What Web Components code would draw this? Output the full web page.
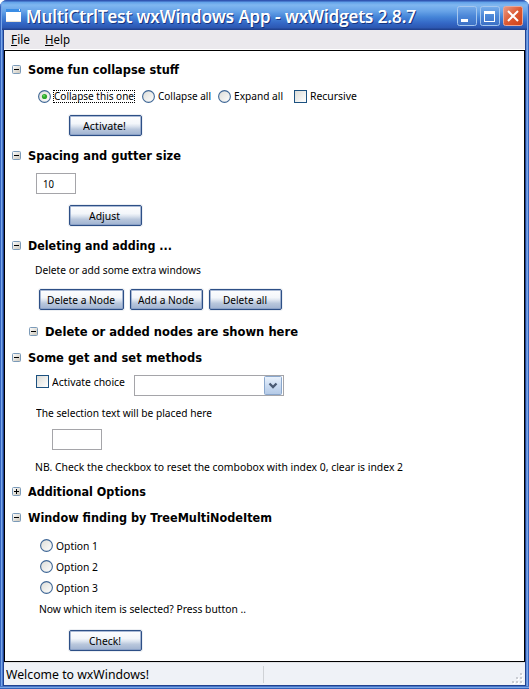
<!DOCTYPE html>
<html lang="en"><head><meta charset="utf-8"><title>MultiCtrlTest</title>
<style>
html,body{margin:0;width:529px;height:689px;overflow:hidden;background:#fff}
body{font:11px/16px "Noto Sans","Open Sans",sans-serif;color:#000}
</style></head><body>
<xp-window>
<xp-titlebar slot="title" w="390">MultiCtrlTest wxWindows App - wxWidgets 2.8.7</xp-titlebar>
<xp-menubar slot="menu"></xp-menubar>
<ui-row style="--gap:10px;--h:18px;--x:7px"><tree-node w="151">Some fun collapse stuff</tree-node></ui-row>
<ui-row style="--gap:8px;--h:18px;--x:33px"><xp-radio checked w="80" style="margin-right:8px">Collapse this one</xp-radio><xp-radio w="53" style="margin-right:7px">Collapse all</xp-radio><xp-radio w="49" style="margin-right:11px">Expand all</xp-radio><xp-check w="47">Recursive</xp-check></ui-row>
<ui-row style="--gap:10px;--h:21px;--x:64px"><xp-button style="width:73px" w="43">Activate!</xp-button></ui-row>
<ui-row style="--gap:11px;--h:18px;--x:7px"><tree-node w="153">Spacing and gutter size</tree-node></ui-row>
<ui-row style="--gap:8px;--h:21px;--x:31px"><xp-input style="width:40px"><fit-text w="11">10</fit-text></xp-input></ui-row>
<ui-row style="--gap:11px;--h:21px;--x:64px"><xp-button style="width:73px" w="31">Adjust</xp-button></ui-row>
<ui-row style="--gap:11px;--h:18px;--x:7px"><tree-node w="144">Deleting and adding ...</tree-node></ui-row>
<ui-row style="--gap:6px;--h:18px;--x:30px"><fit-text w="166">Delete or add some extra windows</fit-text></ui-row>
<ui-row style="--gap:10px;--h:21px;--x:34px"><xp-button style="width:85px;margin-right:6px" w="68">Delete a Node</xp-button><xp-button style="width:73px;margin-right:6px" w="56">Add a Node</xp-button><xp-button style="width:73px" w="44">Delete all</xp-button></ui-row>
<ui-row style="--gap:13px;--h:18px;--x:24px"><tree-node w="253">Delete or added nodes are shown here</tree-node></ui-row>
<ui-row style="--gap:8px;--h:18px;--x:7px"><tree-node w="174">Some get and set methods</tree-node></ui-row>
<ui-row style="--gap:8px;--h:21px;--x:31px"><xp-check style="align-self:flex-start;margin-right:9px" w="73">Activate choice</xp-check><xp-combo></xp-combo></ui-row>
<ui-row style="--gap:8px;--h:18px;--x:31px"><fit-text w="176">The selection text will be placed here</fit-text></ui-row>
<ui-row style="--gap:7px;--h:21px;--x:47px"><xp-input style="width:50px"></xp-input></ui-row>
<ui-row style="--gap:8px;--h:18px;--x:30px"><fit-text w="368">NB. Check the checkbox to reset the combobox with index 0, clear is index 2</fit-text></ui-row>
<ui-row style="--gap:7px;--h:18px;--x:7px"><tree-node collapsed w="118">Additional Options</tree-node></ui-row>
<ui-row style="--gap:8px;--h:18px;--x:7px"><tree-node w="244">Window finding by TreeMultiNodeItem</tree-node></ui-row>
<ui-row style="--gap:8px;--h:21px;--x:35px"><xp-radio w="42">Option 1</xp-radio></ui-row>
<ui-row style="--h:21px;--x:35px"><xp-radio w="42">Option 2</xp-radio></ui-row>
<ui-row style="--h:21px;--x:35px"><xp-radio w="42">Option 3</xp-radio></ui-row>
<ui-row style="--gap:1px;--h:20px;--x:34px"><fit-text w="207">Now which item is selected? Press button ..</fit-text></ui-row>
<ui-row style="--gap:11px;--h:21px;--x:64px"><xp-button style="width:73px" w="32">Check!</xp-button></ui-row>
<xp-statusbar slot="status">Welcome to wxWindows!</xp-statusbar>
</xp-window>
<script>
const define = (name, markup, setup) => customElements.define(name, class extends HTMLElement {
  connectedCallback() {
    if (this.shadowRoot) return;
    const root = this.attachShadow({mode: 'open'});
    const t = document.createElement('template');
    t.innerHTML = typeof markup === 'function' ? markup(this) : markup;
    root.append(t.content.cloneNode(true));
    if (setup) setup(this, root);
  }
});
const label = el => `<fit-text w="${el.getAttribute('w')}"><slot></slot></fit-text>`;

define('xp-window', `<style>
:host{display:flex;flex-direction:column;box-sizing:border-box;width:529px;height:689px;background:#2a52a8;border-radius:7px 7px 0 0;overflow:hidden}
.body{flex:1;min-height:0;display:flex;flex-direction:column;padding:0 4px 4px;background:linear-gradient(90deg,#3565bf 1px,#78a5e8 1px,#78a5e8 2px,#4979cd 2px,#4979cd 3px,#21428f 3px,#21428f 526px,#4979cd 526px,#78a5e8 527px,#78a5e8 528px,#3565bf 528px);box-shadow:inset 0 -1px #3262b9,inset 0 -2px #7aa5e5,inset 0 -3px #4776c9}
main{flex:1;min-height:0;background:#fff;border:1px solid #000}
</style><slot name="title"></slot><div class="body"><slot name="menu"></slot><main><slot></slot></main><slot name="status"></slot></div>`);

define('xp-titlebar', el => `<style>
:host{display:flex;align-items:center;height:30px;box-sizing:border-box;padding:2px 6px 0 6px;background:linear-gradient(#3156b2 0,#3156b2 1px,#5fa0e8 2px,#80b7f0 5px,#68a4e8 11px,#4585d8 17px,#3468c6 23px,#2c57b1 28px,#21428f 29px);box-shadow:inset 1px 0 #3565bf,inset 2px 0 #78a5e8,inset -1px 0 #3565bf,inset -2px 0 #78a5e8;font:600 17.5px/24px "Open Sans","Noto Sans",sans-serif;color:#fff;text-shadow:1px 1px #17347f,.3px 0 #fff}
.t{margin-left:5px;flex:1}.b{display:flex;gap:3px}svg{display:block}.i{margin-bottom:2px}
</style><svg class="i" width="15" height="13"><rect width="15" height="13" fill="#fff"/><rect width="15" height="3" fill="#3b8de5"/><rect x="13" width="1" height="2" fill="#d9ecff"/><rect y="12" width="15" height="1" fill="#e8e2d6"/></svg><div class="t">${label(el)}</div>
<div class="b">
<svg width="20" height="20"><defs><linearGradient id="g" x2="0" y2="1"><stop stop-color="#78aeeb"/><stop offset=".5" stop-color="#4c87d8"/><stop offset="1" stop-color="#3c70c5"/></linearGradient></defs><rect x=".5" y=".5" width="19" height="19" rx="2" fill="url(#g)" stroke="#a6c7ee"/><rect x="4" y="13" width="7" height="3" fill="#fff"/></svg>
<svg width="20" height="20"><rect x=".5" y=".5" width="19" height="19" rx="2" fill="url(#g)" stroke="#a6c7ee"/><path d="M4 5h11v11H4zM5 8v7h9V8z" fill="#fff" fill-rule="evenodd"/></svg>
<svg width="20" height="20"><defs><linearGradient id="r" x2="1" y2="1"><stop stop-color="#ea9c87"/><stop offset=".5" stop-color="#dc5a33"/><stop offset="1" stop-color="#cf3f17"/></linearGradient></defs><rect x=".5" y=".5" width="19" height="19" rx="2" fill="url(#r)" stroke="#e7a799"/><path d="M5 5l10 10M15 5L5 15" stroke="#fff" stroke-width="2"/></svg>
</div>`);

define('xp-menubar', `<style>
:host{display:flex;gap:15px;height:20px;box-sizing:border-box;padding-left:7px;align-items:center;background:#ebe9ed;border-bottom:1px solid #fff;font-size:12px}
</style><fit-text w="19"><u>F</u>ile</fit-text><fit-text w="25"><u>H</u>elp</fit-text>`);

define('ui-row', `<style>:host{display:flex;align-items:center;height:var(--h);padding:var(--gap,0) 0 0 var(--x)}</style><slot></slot>`);

define('tree-node', el => `<style>
:host{display:flex;align-items:center;gap:7px;font:bold 12.5px/18px "DejaVu Sans","Noto Sans",sans-serif}
svg{display:block;width:9px;height:9px;margin-bottom:2px}
</style><svg><defs><linearGradient id="n" x2="1" y2="1"><stop stop-color="#fff"/><stop offset="1" stop-color="#c9c4b8"/></linearGradient></defs><rect x=".5" y=".5" width="8" height="8" rx="1" fill="url(#n)" stroke="#7b9ab8"/><path d="M2 4h5v1H2z${el.hasAttribute('collapsed') ? 'M4 2h1v5H4z' : ''}"/></svg>${label(el)}`);

define('xp-radio', el => `<style>
:host{display:flex;align-items:center;gap:3px}svg{display:block;flex:none}
.f{padding:0 1px;margin-left:-1px;margin-right:-1px;height:13px;display:flex;align-items:center;${el.hasAttribute('checked') ? 'outline:1px dotted #000;outline-offset:-1px;' : ''}}
</style><svg width="13" height="13"><defs><linearGradient id="c" x2="1" y2="1"><stop stop-color="#dcdcd6"/><stop offset="1" stop-color="#fff"/></linearGradient></defs><circle cx="6.5" cy="6.5" r="5.9" fill="url(#c)" stroke="#3f6796" stroke-width="1.1"/>${el.hasAttribute('checked') ? '<circle cx="6.5" cy="6.5" r="2.6" fill="#2fa82c"/><circle cx="6" cy="5.8" r="1" fill="#62d75c"/>' : ''}</svg><div class="f">${label(el)}</div>`);

define('xp-check', el => `<style>
:host{display:flex;align-items:center;gap:3px;height:13px}
i{box-sizing:border-box;width:13px;height:13px;border:1px solid #1c5180;background:linear-gradient(135deg,#dcdcd7,#fff)}
</style><i></i>${label(el)}`);

define('xp-button', el => `<style>
:host{display:flex;box-sizing:border-box;height:21px;align-items:center;justify-content:center;border:1px solid #2d4f86;border-radius:2px;background:linear-gradient(#fdfdfe,#f3f6fa 40%,#dbe3ee 54%,#b9c7dc 70%,#9fb2d0);box-shadow:0 0 0 1px #eceff3,inset 0 0 0 1px #8199c2aa}
fit-text{margin-right:2px}
</style>${label(el)}`);

define('xp-input', `<style>:host{display:flex;align-items:center;box-sizing:border-box;height:21px;border:1px solid #a5a5a9;background:#fff;padding-left:6px}</style><slot></slot>`);

define('xp-combo', `<style>:host{display:flex;justify-content:flex-end;box-sizing:border-box;width:150px;height:21px;border:1px solid #a5a5a9;background:#fff}svg{display:block}</style>
<svg width="19" height="19"><defs><linearGradient id="d" x2="0" y2="1"><stop stop-color="#eaf2fc"/><stop offset=".5" stop-color="#cbdcf2"/><stop offset="1" stop-color="#b3c9e6"/></linearGradient></defs><rect x=".5" y=".5" width="17" height="18" rx="1" fill="url(#d)" stroke="#8aa7cc"/><path d="M5.5 7.5L9 11L12.5 7.5" fill="none" stroke="#4a5a73" stroke-width="2.3"/></svg>`);

define('xp-statusbar', `<style>
:host{display:flex;align-items:center;height:23px;box-sizing:border-box;background:#eff2f7;border-top:1px solid #dfe1e4;padding-left:2px;font-size:13px}
i{width:1px;height:17px;background:#cfd2d6;margin-left:114px}svg{display:block;margin:8px 2px 0 auto}
</style><fit-text w="143"><slot></slot></fit-text><i></i><svg width="12" height="12"><path d="M10 2h2v2h-2zM6 6h2v2H6zM10 6h2v2h-2zM2 10h2v2H2zM6 10h2v2H6zM10 10h2v2h-2z" fill="#fff"/><path d="M9 1h2v2H9zM5 5h2v2H5zM9 5h2v2H9zM1 9h2v2H1zM5 9h2v2H5zM9 9h2v2H9z" fill="#c9ccd2"/></svg>`);

/* A single line of text scaled horizontally to the width given in "w". */
define('fit-text', `<style>:host{display:block;flex:none;white-space:nowrap}span{display:inline-block;transform-origin:0 50%}</style><span><slot></slot></span>`, (el, root) => {
  const w = +el.getAttribute('w'), s = root.querySelector('span');
  const natural = s.getBoundingClientRect().width;
  el.style.width = w + 'px';
  if (natural) s.style.transform = `scaleX(${w / natural})`;
});
</script></body></html>
